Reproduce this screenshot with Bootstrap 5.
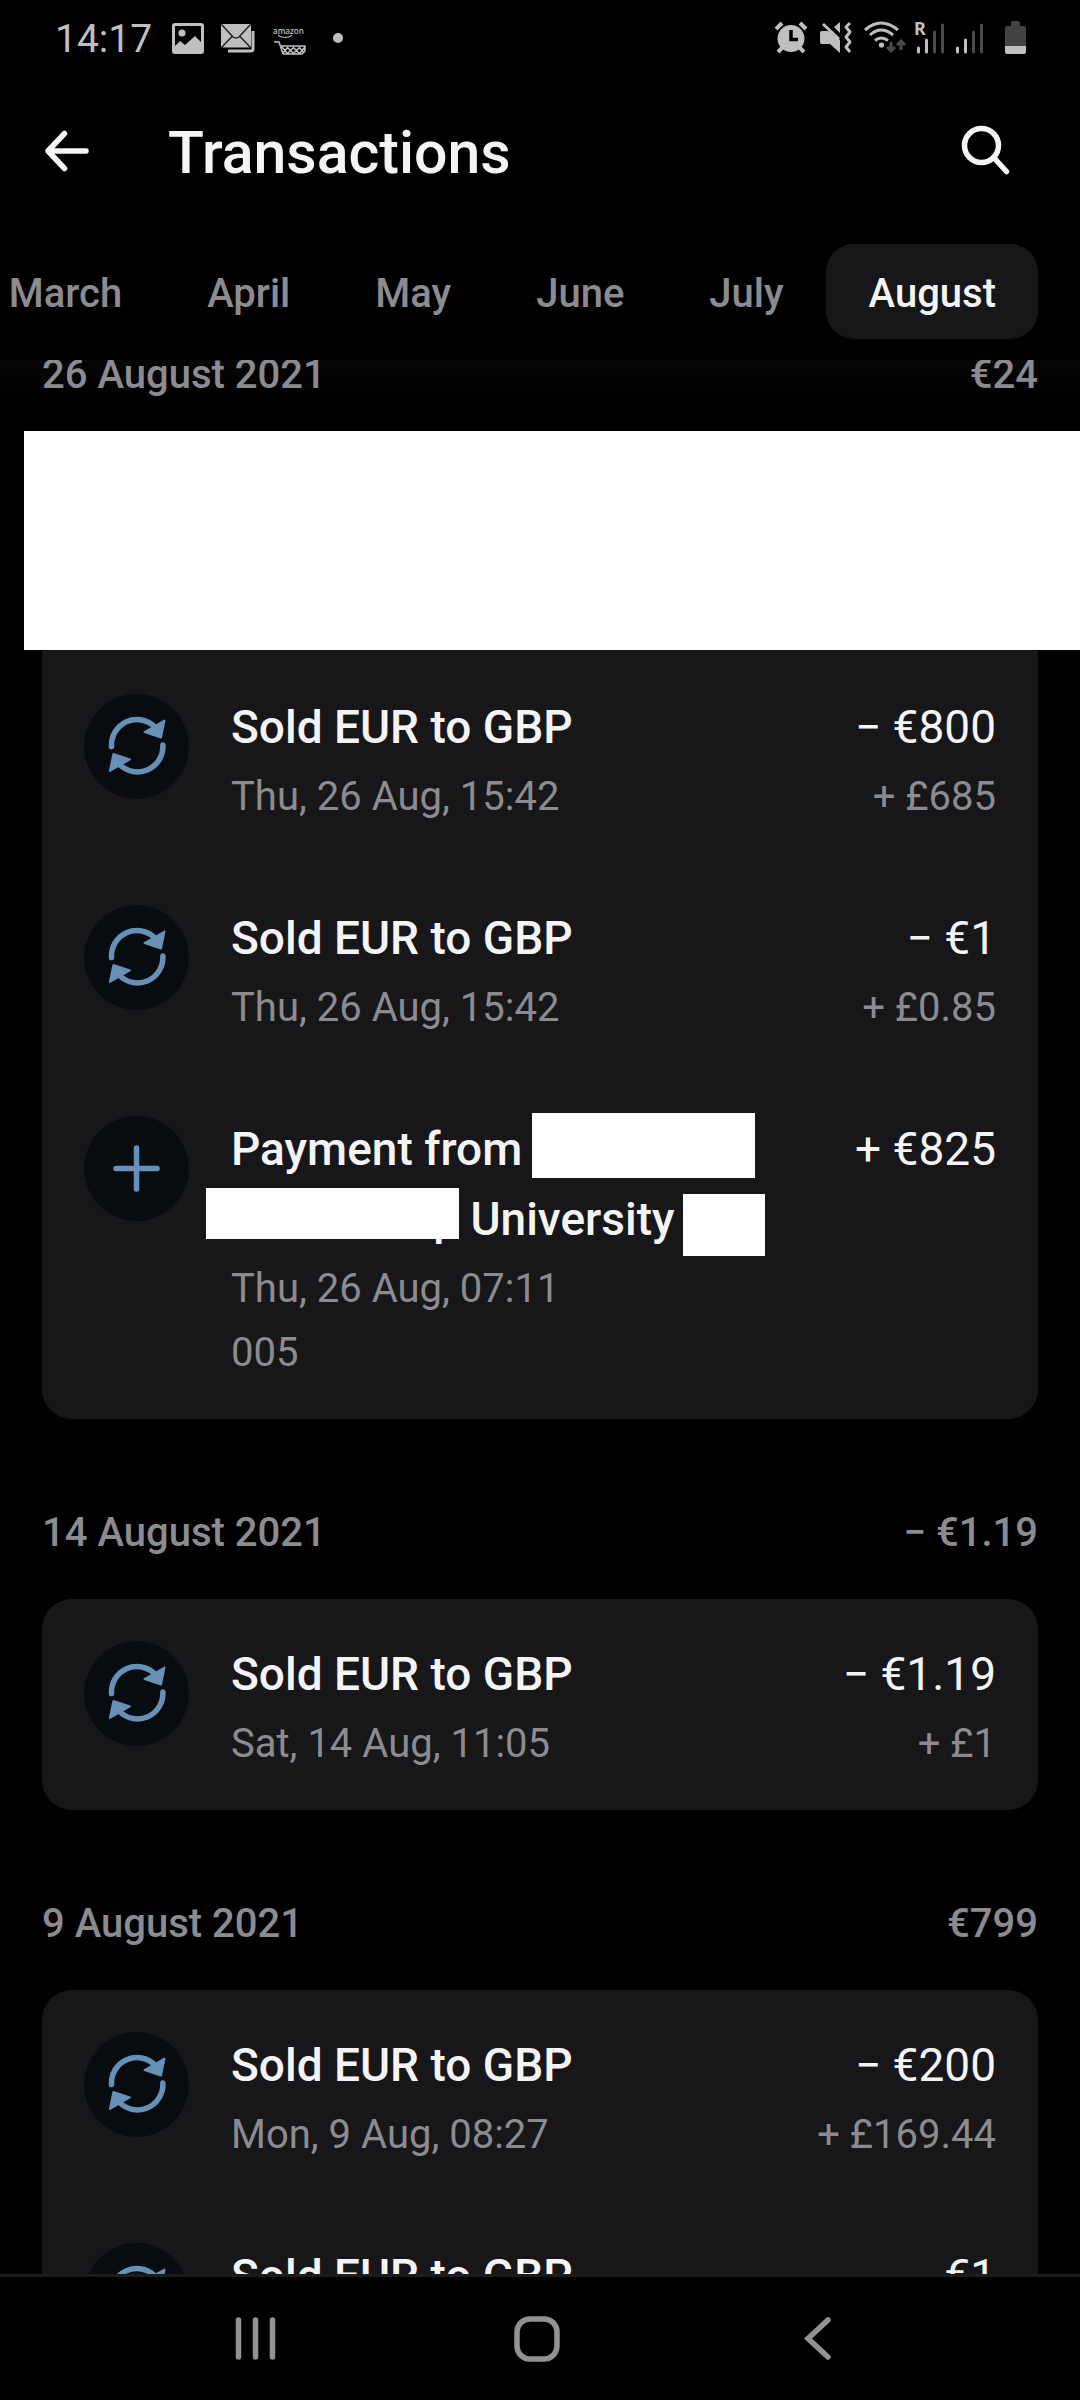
<!DOCTYPE html>
<html lang="en">
<head>
<meta charset="utf-8">
<meta name="viewport" content="width=device-width, initial-scale=1">
<title>Transactions</title>
<link href="https://cdn.jsdelivr.net/npm/bootstrap@5.3.0/dist/css/bootstrap.min.css" rel="stylesheet">
<script src="https://cdn.jsdelivr.net/npm/bootstrap@5.3.0/dist/js/bootstrap.bundle.min.js" defer></script>
<style>
  body { background: #000; color: #f4f4f4; font-family: Roboto, "Liberation Sans", sans-serif; font-size: 40px; }
  svg { display: block; flex: none; }
  .status-bar { height: 78px; padding: 0 54px 0 55px; color: #bfbfbf; }
  .clock { font-size: 39px; line-height: 46px; }
  .app-bar { height: 152px; padding: 0 42px 2px; }
  .app-bar h1 { font-size: 59px; line-height: 68px; font-weight: 500; }
  .icon-btn { width: 84px; height: 84px; padding: 0; border: 0; background: none; color: inherit; }
  .back-btn { margin-right: 42px; }
  .months { padding: 14px 42px 21px; }
  .months .nav-link { flex: none; padding: 26px 42px 22px 43px; border-radius: 28px; color: #8c8b90; font-weight: 500; line-height: 47px; }
  .months .nav-link.active { background: #171719; color: #f4f4f4; }
  .feed { background: linear-gradient(#070707, #000 40px); }
  .feed-scroll { margin-top: -99px; padding: 0 42px; }
  .day { padding: 82px 0 34px; color: #8c8b90; font-size: 40px; font-weight: 500; line-height: 64px; }
  .day h2 { font-size: inherit; line-height: inherit; font-weight: inherit; }
  .tx-card { background: #171719; border-radius: 30px; }
  .tx { min-height: 211px; padding: 40px 42px 34px; }
  .tx-icon { margin: 2px 42px 0 0; border-radius: 50%; background: #080c11; color: #6790b7; }
  .tx-name, .tx-amount { font-size: 46px; line-height: 70px; margin-bottom: 3px; }
  .tx-name { font-weight: 500; }
  .tx-sub { color: #8c8b90; line-height: 64px; }
  .cover { background: #fff; }
  .cover-row { top: -10px; left: -18px; right: -42px; height: 219px; }
  .blank { position: relative; display: inline-block; height: 70px; vertical-align: top; text-align: right; }
  .blank::after { content: ""; position: absolute; left: 0; right: 0; background: #fff; }
  .blank-name { width: 223px; }
  .blank-name::after { top: -1px; left: -2px; right: 2px; height: 65px; }
  .blank-place { width: 228px; }
  .blank-place::after { top: 4px; left: -25px; height: 51px; }
  .blank-end { width: 82px; margin-left: 8px; }
  .blank-end::after { top: 10px; height: 62px; }
  .sys-nav { height: 126px; padding: 0 122px 0 115px; border-top: 3px solid #1c1c1d; color: #929292; }
  .sys-nav button { border: 0; background: none; color: inherit; padding: 0; }
</style>
</head>
<body>
<svg width="0" height="0" class="position-absolute" aria-hidden="true">
  <defs>
    <g id="half">
      <path d="M27.500 52.500A25.500 25.500 0 0 1 71 33" fill="none" stroke="currentColor" stroke-width="5.500" stroke-linecap="round"/>
      <path d="M80.500 26.500L77 43.500L60.500 38Z" fill="currentColor" stroke="currentColor" stroke-width="2" stroke-linejoin="round"/>
    </g>
    <g id="exchange"><use href="#half"/><use href="#half" transform="rotate(180 53.200 51.700)"/></g>
  </defs>
</svg>
<div class="d-flex flex-column vh-100 overflow-hidden">
  <header class="flex-shrink-0">
    <div class="status-bar d-flex align-items-center justify-content-between">
      <div class="d-flex align-items-center">
        <span class="clock">14:17</span>
        <svg width="194" height="78" viewBox="151 0 194 78" aria-hidden="true" fill="currentColor">
          <path fill-rule="evenodd" d="M174 23h26a3 3 0 0 1 3 3v25a3 3 0 0 1-3 3h-26a3 3 0 0 1-3-3V26a3 3 0 0 1 3-3zM174 26v20l5-5 5 4 10-9 6 6V26z"/>
          <circle cx="181" cy="33" r="3.500"/>
          <path d="M227 51h23a2 2 0 0 0 2-2V31" fill="none" stroke="currentColor" stroke-width="3"/>
          <rect x="220" y="24" width="30" height="23.500" rx="2"/>
          <path d="M221 25l11 12q3 2 6 0l11-12M221 47l10-10.500M249 47l-10-10.500" fill="none" stroke="#222" stroke-width="1.500"/>
          <text x="272" y="34" font-family="Open Sans, sans-serif" font-weight="600" font-size="8">amazon</text>
          <path d="M277 35.500q7 4 14 0" fill="none" stroke="currentColor" stroke-width="1.200"/>
          <path d="M273 42h5l4 12M280 46h24v5l-3 3h-19M281 47l6 7M286 47l7 7M292 47l7 7M298 47l5 6M287 47l-5 6M293 47l-7 7M299 47l-7 7M304 47l-6 7" fill="none" stroke="currentColor" stroke-width="1.500"/>
          <circle cx="337" cy="38" r="5"/>
        </svg>
      </div>
      <svg width="256" height="78" viewBox="770 0 256 78" aria-hidden="true" fill="currentColor">
        <circle cx="791" cy="38.500" r="13.500"/>
        <path d="M776 29l6-6M806 29l-6-6" stroke="currentColor" stroke-width="4"/>
        <path d="M778 52l5-5M804 52l-5-5" stroke="currentColor" stroke-width="4"/>
        <path d="M791 30v9.500h7" fill="none" stroke="#000" stroke-width="3.500"/>
        <path d="M822 31h6l2 1 10 8v13l-10-9h-8a2 2 0 0 1-2-2v-9a2 2 0 0 1 2-2zM834 27l6-5v11z"/>
        <path d="M823 24l16 15" stroke="currentColor" stroke-width="3"/>
        <path d="M850 23l-4 4 4 5-4 5 4 5-4 5 4 5" fill="none" stroke="currentColor" stroke-width="3" stroke-linejoin="round"/>
        <g fill="none" stroke="currentColor" stroke-width="3"><path d="M865 30q16-14 33 0"/><path d="M870 35q11-10 23 0"/><path d="M875 40.500q6-5 13 0"/></g>
        <circle cx="881.500" cy="45" r="2.600"/>
        <path d="M891 42v9M887 47l4 4 4-4M901 50v-9M897 45l4-4 4 4" fill="none" stroke="#4a4a4a" stroke-width="3"/>
        <text x="914" y="35" font-family="Noto Sans, sans-serif" font-weight="700" font-size="18">R</text>
        <g stroke="currentColor" stroke-width="3" stroke-linecap="round"><path d="M918.500 48v4M926.500 40v12M957.500 48v4M965.500 40v12"/></g>
        <g stroke="#4a4a4a" stroke-width="3" stroke-linecap="round"><path d="M934.500 32v20M942.500 25v27M973.500 32v20M981.500 25v27"/></g>
        <path d="M1005 46V28a2 2 0 0 1 2-2h4v-3a2 2 0 0 1 2-2h5a2 2 0 0 1 2 2v3h4a2 2 0 0 1 2 2v18z" fill="#424242"/>
        <path d="M1005 46h21v6a2 2 0 0 1-2 2h-17a2 2 0 0 1-2-2z"/>
      </svg>
    </div>
    <div class="app-bar d-flex align-items-center">
      <button type="button" class="icon-btn back-btn" aria-label="Back">
        <svg width="84" height="84" viewBox="42 111 84 84" fill="none" stroke="currentColor" stroke-width="5.500" stroke-linecap="round" stroke-linejoin="round"><path d="M86 151H48M64.500 133.500L48 151l16.500 17.500"/></svg>
      </button>
      <h1 class="m-0 flex-grow-1">Transactions</h1>
      <button type="button" class="icon-btn" aria-label="Search">
        <svg width="84" height="84" viewBox="954 111 84 84" fill="none" stroke="currentColor" stroke-width="5.500" stroke-linecap="round"><circle cx="981.500" cy="145.500" r="17"/><path d="M995 159l11.500 12.500"/></svg>
      </button>
    </div>
    <nav class="months nav flex-nowrap justify-content-end overflow-hidden" aria-label="Months">
      <a class="nav-link" href="#march">March</a>
      <a class="nav-link" href="#april">April</a>
      <a class="nav-link" href="#may">May</a>
      <a class="nav-link" href="#june">June</a>
      <a class="nav-link" href="#july">July</a>
      <a class="nav-link active" href="#august" aria-current="page">August</a>
    </nav>
  </header>

  <main class="feed flex-grow-1 overflow-hidden">
    <div class="feed-scroll">
      <section>
        <div class="day d-flex justify-content-between"><h2 class="m-0">26 August 2021</h2><span>€24</span></div>
        <ul class="tx-card list-unstyled m-0 position-relative">
          <li class="tx"><div class="cover cover-row position-absolute"></div></li>
          <li class="tx d-flex align-items-start">
            <svg class="tx-icon" width="105" height="105" aria-hidden="true"><use href="#exchange"/></svg>
            <div class="flex-grow-1"><div class="tx-name">Sold EUR to GBP</div><div class="tx-sub">Thu, 26 Aug, 15:42</div></div>
            <div class="text-end text-nowrap"><div class="tx-amount">− €800</div><div class="tx-sub">+ £685</div></div>
          </li>
          <li class="tx d-flex align-items-start">
            <svg class="tx-icon" width="105" height="105" aria-hidden="true"><use href="#exchange"/></svg>
            <div class="flex-grow-1"><div class="tx-name">Sold EUR to GBP</div><div class="tx-sub">Thu, 26 Aug, 15:42</div></div>
            <div class="text-end text-nowrap"><div class="tx-amount">− €1</div><div class="tx-sub">+ £0.85</div></div>
          </li>
          <li class="tx d-flex align-items-start">
            <svg class="tx-icon" width="105" height="105" aria-hidden="true"><path d="M52.500 32v41M32 52.500h41" stroke="currentColor" stroke-width="5.500" stroke-linecap="round"/></svg>
            <div class="flex-grow-1">
              <div class="tx-name">Payment from <span class="blank blank-name"></span><br><span class="blank blank-place">p</span> University<span class="blank blank-end"></span></div>
              <div class="tx-sub">Thu, 26 Aug, 07:11</div>
              <div class="tx-sub">005</div>
            </div>
            <div class="text-end text-nowrap"><div class="tx-amount">+ €825</div></div>
          </li>
        </ul>
      </section>
      <section>
        <div class="day d-flex justify-content-between"><h2 class="m-0">14 August 2021</h2><span>− €1.19</span></div>
        <ul class="tx-card list-unstyled m-0">
          <li class="tx d-flex align-items-start">
            <svg class="tx-icon" width="105" height="105" aria-hidden="true"><use href="#exchange"/></svg>
            <div class="flex-grow-1"><div class="tx-name">Sold EUR to GBP</div><div class="tx-sub">Sat, 14 Aug, 11:05</div></div>
            <div class="text-end text-nowrap"><div class="tx-amount">− €1.19</div><div class="tx-sub">+ £1</div></div>
          </li>
        </ul>
      </section>
      <section>
        <div class="day d-flex justify-content-between"><h2 class="m-0">9 August 2021</h2><span>€799</span></div>
        <ul class="tx-card list-unstyled m-0">
          <li class="tx d-flex align-items-start">
            <svg class="tx-icon" width="105" height="105" aria-hidden="true"><use href="#exchange"/></svg>
            <div class="flex-grow-1"><div class="tx-name">Sold EUR to GBP</div><div class="tx-sub">Mon, 9 Aug, 08:27</div></div>
            <div class="text-end text-nowrap"><div class="tx-amount">− €200</div><div class="tx-sub">+ £169.44</div></div>
          </li>
          <li class="tx d-flex align-items-start">
            <svg class="tx-icon" width="105" height="105" aria-hidden="true"><use href="#exchange"/></svg>
            <div class="flex-grow-1"><div class="tx-name">Sold EUR to GBP</div></div>
            <div class="text-end text-nowrap"><div class="tx-amount">− €1</div></div>
          </li>
        </ul>
      </section>
    </div>
  </main>

  <footer class="sys-nav d-flex flex-shrink-0">
    <button type="button" class="flex-fill d-flex align-items-center justify-content-center" aria-label="Recent apps">
      <svg width="46" height="46" fill="none" stroke="currentColor" stroke-width="5.500" stroke-linecap="round"><path d="M5.500 4v37M22.500 4v37M39.500 4v37"/></svg>
    </button>
    <button type="button" class="flex-fill d-flex align-items-center justify-content-center" aria-label="Home">
      <svg width="46" height="46" fill="none" stroke="currentColor" stroke-width="5.500"><rect x="3" y="3" width="40" height="40" rx="13"/></svg>
    </button>
    <button type="button" class="flex-fill d-flex align-items-center justify-content-center" aria-label="Back">
      <svg width="46" height="46" fill="none" stroke="currentColor" stroke-width="5.500" stroke-linecap="round"><path d="M33 4L13 22.500L33 41"/></svg>
    </button>
  </footer>
</div>
</body>
</html>
